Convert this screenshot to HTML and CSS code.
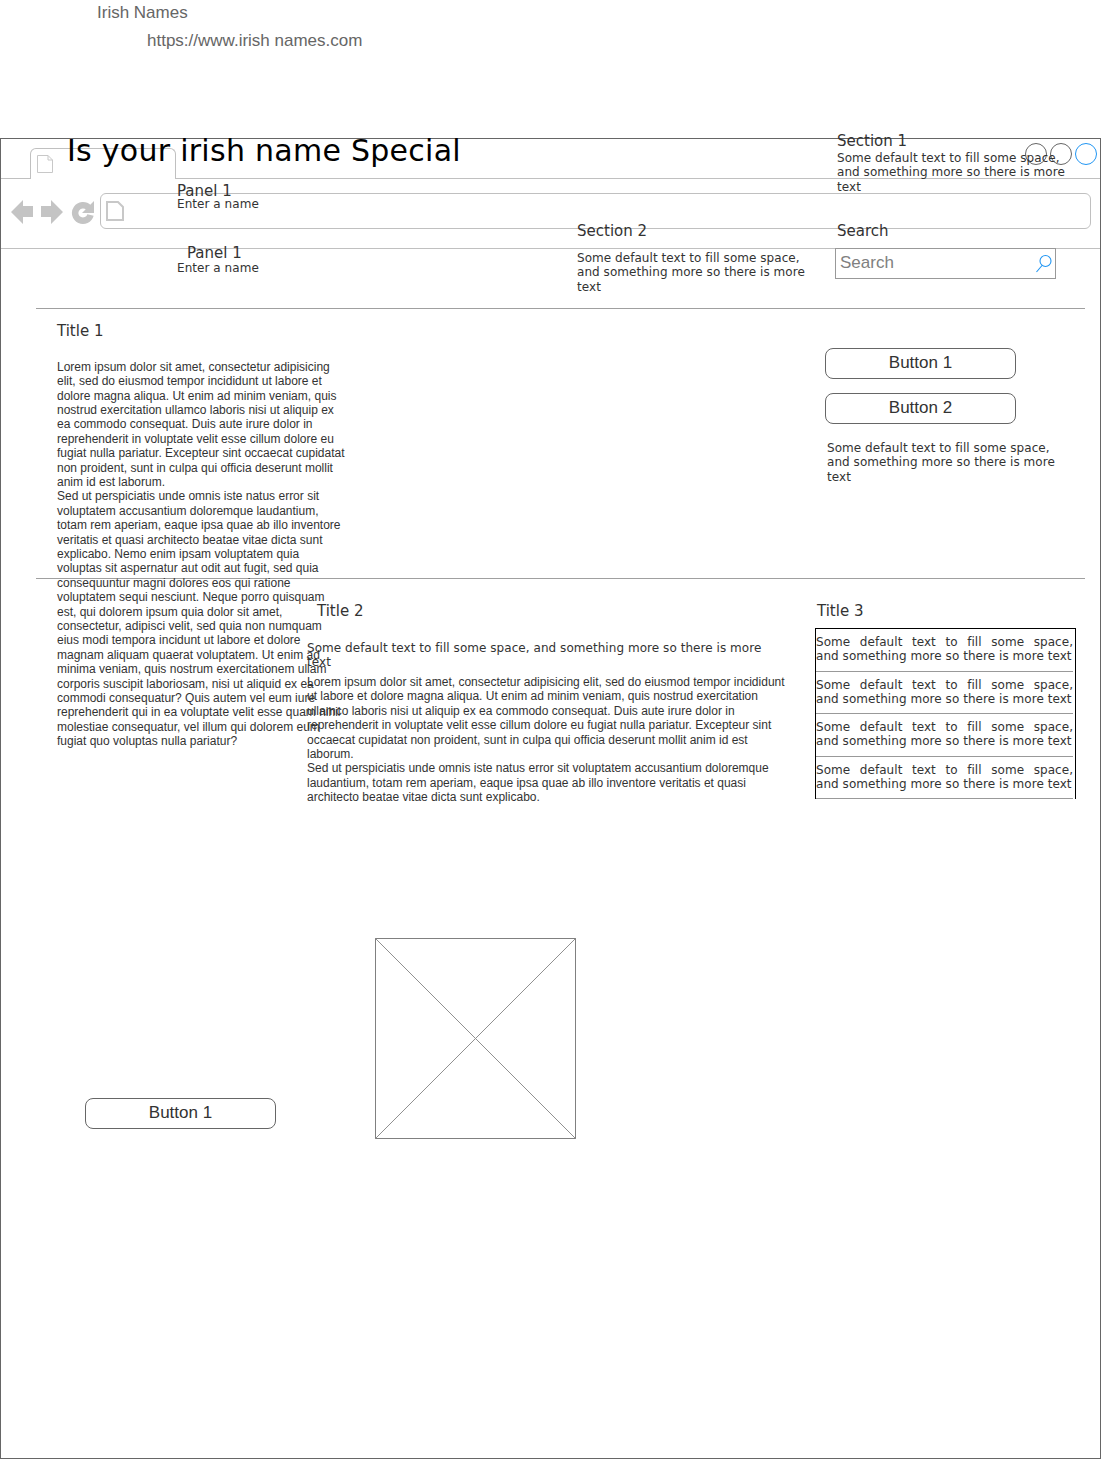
FILE: index.html
```html
<!DOCTYPE html>
<html lang="en">
<head>
<meta charset="utf-8">
<title>Irish Names</title>
<link rel="stylesheet" href="styles.css">
</head>
<body>
<main class="canvas">
  <div class="label site-name">Irish Names</div>
  <div class="label site-url">https://www.irish names.com</div>

  <div class="window"></div>
  <div class="rule tabline-left"></div>
  <div class="rule tabline-right"></div>
  <div class="tab"></div>
  <svg class="doc tab-doc" viewBox="0 0 16 18"><path d="M.5.5H11L15.5 5V17.5H.5Z M11 .5V5H15.5" fill="#fff" stroke="#c8c8c8"/></svg>
  <div class="rule toolbar-line"></div>
  <div class="address"></div>
  <svg class="nav-icons" viewBox="0 0 84 26">
    <path d="M0 13 12 1V7H22V18H12V25Z" fill="#c4c4c4"/>
    <path d="M52 13 40 1V7H30V18H40V25Z" fill="#c4c4c4"/>
    <path d="M77.500 8.500A7.800 7.800 0 1 0 79.500 16" fill="none" stroke="#c4c4c4" stroke-width="6.500"/>
    <path d="M83 2V14H71Z" fill="#c4c4c4"/>
  </svg>
  <svg class="doc addr-doc" viewBox="0 0 18 20"><path d="M1 1H12L17 6V19H1Z" fill="#fff" stroke="#c8c8c8" stroke-width="2"/></svg>
  <span class="dot dot-1"></span><span class="dot dot-2"></span><span class="dot dot-3"></span>

  <h1 class="headline">Is your irish name Special</h1>

  <div class="heading panel-a">Panel 1</div>
  <div class="copy panel-a-sub">Enter a name</div>
  <div class="heading panel-b">Panel 1</div>
  <div class="copy panel-b-sub">Enter a name</div>

  <div class="heading sec-1">Section 1</div>
  <div class="copy sec-1-text">Some default text to fill some space,<br>and something more so there is more<br>text</div>
  <div class="heading sec-2">Section 2</div>
  <div class="copy sec-2-text">Some default text to fill some space,<br>and something more so there is more<br>text</div>
  <div class="heading search-title">Search</div>
  <div class="search">
    <span class="search-text">Search</span>
    <svg class="search-icon" viewBox="0 0 18 20"><circle cx="10.500" cy="7" r="5.500" fill="none" stroke="#2196f3" stroke-width="1.100"/><path d="M7 11.500 1.500 18" fill="none" stroke="#2196f3" stroke-width="1.100"/></svg>
  </div>

  <div class="rule divider-1"></div>
  <div class="rule divider-2"></div>

  <div class="heading title-1">Title 1</div>
  <p class="body lorem-1">Lorem ipsum dolor sit amet, consectetur adipisicing<br>elit, sed do eiusmod tempor incididunt ut labore et<br>dolore magna aliqua. Ut enim ad minim veniam, quis<br>nostrud exercitation ullamco laboris nisi ut aliquip ex<br>ea commodo consequat. Duis aute irure dolor in<br>reprehenderit in voluptate velit esse cillum dolore eu<br>fugiat nulla pariatur. Excepteur sint occaecat cupidatat<br>non proident, sunt in culpa qui officia deserunt mollit<br>anim id est laborum.<br>Sed ut perspiciatis unde omnis iste natus error sit<br>voluptatem accusantium doloremque laudantium,<br>totam rem aperiam, eaque ipsa quae ab illo inventore<br>veritatis et quasi architecto beatae vitae dicta sunt<br>explicabo. Nemo enim ipsam voluptatem quia<br>voluptas sit aspernatur aut odit aut fugit, sed quia<br>consequuntur magni dolores eos qui ratione<br>voluptatem sequi nesciunt. Neque porro quisquam<br>est, qui dolorem ipsum quia dolor sit amet,<br>consectetur, adipisci velit, sed quia non numquam<br>eius modi tempora incidunt ut labore et dolore<br>magnam aliquam quaerat voluptatem. Ut enim ad<br>minima veniam, quis nostrum exercitationem ullam<br>corporis suscipit laboriosam, nisi ut aliquid ex ea<br>commodi consequatur? Quis autem vel eum iure<br>reprehenderit qui in ea voluptate velit esse quam nihil<br>molestiae consequatur, vel illum qui dolorem eum<br>fugiat quo voluptas nulla pariatur?</p>

  <button class="btn btn-1">Button 1</button>
  <button class="btn btn-2">Button 2</button>
  <div class="copy side-text">Some default text to fill some space,<br>and something more so there is more<br>text</div>

  <div class="heading title-2">Title 2</div>
  <div class="copy title-2-text">Some default text to fill some space, and something more so there is more<br>text</div>
  <p class="body lorem-2">Lorem ipsum dolor sit amet, consectetur adipisicing elit, sed do eiusmod tempor incididunt<br>ut labore et dolore magna aliqua. Ut enim ad minim veniam, quis nostrud exercitation<br>ullamco laboris nisi ut aliquip ex ea commodo consequat. Duis aute irure dolor in<br>reprehenderit in voluptate velit esse cillum dolore eu fugiat nulla pariatur. Excepteur sint<br>occaecat cupidatat non proident, sunt in culpa qui officia deserunt mollit anim id est<br>laborum.<br>Sed ut perspiciatis unde omnis iste natus error sit voluptatem accusantium doloremque<br>laudantium, totam rem aperiam, eaque ipsa quae ab illo inventore veritatis et quasi<br>architecto beatae vitae dicta sunt explicabo.</p>

  <div class="heading title-3">Title 3</div>
  <ul class="list">
    <li class="list-item"><span class="just">Some default text to fill some space,</span><span>and something more so there is more text</span></li>
    <li class="list-item"><span class="just">Some default text to fill some space,</span><span>and something more so there is more text</span></li>
    <li class="list-item"><span class="just">Some default text to fill some space,</span><span>and something more so there is more text</span></li>
    <li class="list-item"><span class="just">Some default text to fill some space,</span><span>and something more so there is more text</span></li>
  </ul>

  <svg class="placeholder" viewBox="0 0 201 201"><rect x=".5" y=".5" width="200" height="200" fill="#fff" stroke="#808080"/><path d="M.5.500 200.500 200.500M200.500.500 .5 200.500" stroke="#909090" fill="none"/></svg>
  <button class="btn btn-3">Button 1</button>
</main>
</body>
</html>
```
FILE: styles.css
```css
* { box-sizing: border-box; }
html, body { margin: 0; padding: 0; background: #fff; }
.canvas { position: relative; width: 1102px; height: 1460px; overflow: hidden; font-family: "DejaVu Sans", sans-serif; color: #333; }
.canvas > * { position: absolute; margin: 0; }

.label { font-family: "Liberation Sans", sans-serif; font-size: 17px; line-height: 20px; color: #666; white-space: nowrap; }
.site-name { left: 97px; top: 3px; }
.site-url { left: 147px; top: 31px; }

.window { left: 0; top: 138px; width: 1101px; height: 1321px; border: 1px solid #666; }
.rule { height: 1px; background: #c0c0c0; }
.tabline-left { left: 1px; top: 178px; width: 29px; }
.tabline-right { left: 175px; top: 178px; width: 925px; }
.toolbar-line { left: 1px; top: 248px; width: 1099px; }
.tab { left: 30px; top: 148px; width: 146px; height: 31px; background: #fff; border: 1px solid #c0c0c0; border-bottom: 0; border-radius: 6px 6px 0 0; }
.doc { display: block; }
.tab-doc { left: 37px; top: 155px; width: 16px; height: 18px; }
.address { left: 100px; top: 193px; width: 991px; height: 36px; background: #fff; border: 1px solid #c0c0c0; border-radius: 6px; }
.nav-icons { left: 11px; top: 199px; width: 84px; height: 26px; }
.addr-doc { left: 106px; top: 201px; width: 18px; height: 20px; }
.dot { width: 22px; height: 22px; border-radius: 50%; border: 1px solid #666; background: transparent; }
.dot-1 { left: 1025px; top: 143px; }
.dot-2 { left: 1050px; top: 143px; }
.dot-3 { left: 1075px; top: 143px; border-color: #2196f3; }

.headline { left: 67px; top: 132px; font-size: 30px; line-height: 38px; font-weight: 400; letter-spacing: .27px; color: #000; white-space: nowrap; }
.heading { font-size: 15px; line-height: 17px; color: #333; white-space: nowrap; }
.copy { font-size: 12px; line-height: 14.400px; letter-spacing: .05px; color: #333; white-space: nowrap; }
.panel-a { left: 177px; top: 183px; }
.panel-a-sub { left: 177px; top: 197px; }
.panel-b { left: 187px; top: 245px; }
.panel-b-sub { left: 177px; top: 261px; }
.sec-1 { left: 837px; top: 133px; }
.sec-1-text { left: 837px; top: 151px; }
.sec-2 { left: 577px; top: 223px; }
.sec-2-text { left: 577px; top: 251px; }
.search-title { left: 837px; top: 223px; }
.search { left: 835px; top: 248px; width: 221px; height: 31px; background: #fff; border: 1px solid #999; display: flex; align-items: center; justify-content: space-between; padding: 0 2px 2px 4px; }
.search-text { font-family: "Liberation Sans", sans-serif; font-size: 17px; color: #808080; }
.search-icon { width: 18px; height: 20px; margin-top: 2px; }

.divider-1 { left: 36px; top: 308px; width: 1049px; background: #a0a0a0; }
.divider-2 { left: 36px; top: 578px; width: 1049px; background: #a0a0a0; }

.title-1 { left: 57px; top: 323px; }
.title-2 { left: 317px; top: 603px; }
.title-3 { left: 817px; top: 603px; }
.body { font-family: "Liberation Sans", sans-serif; font-size: 12px; line-height: 14.400px; color: #333; white-space: nowrap; }
.lorem-1 { left: 57px; top: 359.700px; }
.lorem-2 { left: 307px; top: 675px; }

.btn { width: 191px; height: 31px; padding: 0 0 2px; background: #fff; border: 1px solid #666; border-radius: 8px; font-family: "Liberation Sans", sans-serif; font-size: 17px; color: #333; }
.btn-1 { left: 825px; top: 348px; }
.btn-2 { left: 825px; top: 393px; }
.btn-3 { left: 85px; top: 1098px; }
.side-text { left: 827px; top: 441px; }
.title-2-text { left: 307px; top: 641px; }

.list { left: 815px; top: 628px; width: 261px; height: 171px; list-style: none; padding: 0 3px 0 0; border: 1px solid #000; border-bottom: 0; }
.list-item { height: 42.500px; padding-top: 6px; border-bottom: 1px solid #999; font-size: 12px; line-height: 14.400px; letter-spacing: .05px; color: #333; margin-right: -1px; white-space: nowrap; }
.list-item span { display: block; }
.just { text-align: justify; text-align-last: justify; white-space: normal; }

.placeholder { left: 375px; top: 938px; width: 201px; height: 201px; }
```
